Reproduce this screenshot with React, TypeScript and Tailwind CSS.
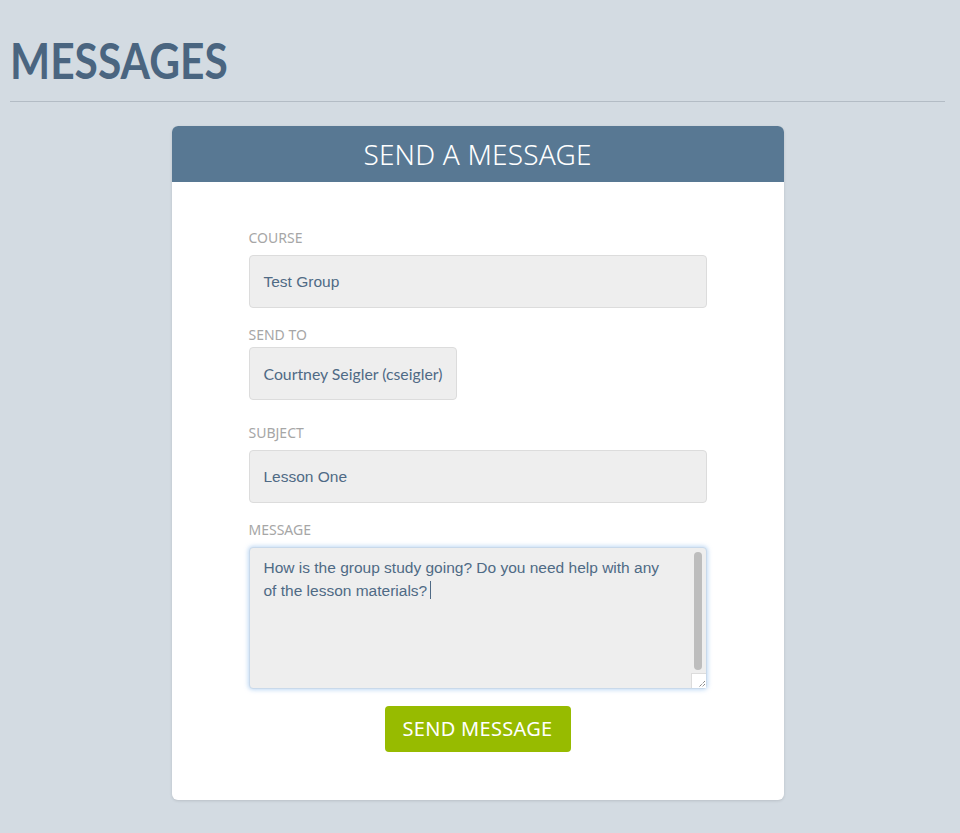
export default function App() {
  return (
    <div className="min-h-[833px] bg-[#d3dbe2] pl-[10px] pr-[15px] pt-[30px] pb-[33px] [font-family:'Noto_Sans',sans-serif]">
      <h1 className="origin-left scale-x-[0.85] text-[50px] font-bold leading-[60px] text-[#4a6580] [font-family:Lato,sans-serif]">MESSAGES</h1>
      <hr className="mt-[11px] border-t border-[#b3bcc5]" />

      <div className="mx-auto mt-[24px] w-[612px] overflow-hidden rounded-[6px] bg-white shadow-[0_1px_3px_rgba(0,0,0,0.12)]">
        <div className="flex h-[56px] items-center justify-center bg-[#587893]">
          <h2 className="text-[28px] font-light tracking-[0.2px] text-white">SEND A MESSAGE</h2>
        </div>

        <form className="px-[77px] pt-[46px] pb-[48px]" onSubmit={(e) => e.preventDefault()}>
          <label className="block text-[14px] leading-[20px] text-[#a6a6a6]">COURSE</label>
          <div className="mt-[7px] flex h-[53px] w-[458px] items-center rounded-[4px] border border-[#dcdcdc] bg-[#eeeeee] px-[14px] text-[15.5px] text-[#4f6a85] [font-family:'Liberation_Sans',Arial,sans-serif]">
            Test Group
          </div>

          <label className="mt-[17px] block text-[14px] leading-[20px] text-[#a6a6a6]">SEND TO</label>
          <div className="mt-[2px] inline-flex h-[53px] items-center whitespace-nowrap rounded-[4px] border border-[#dcdcdc] bg-[#eeeeee] px-[14px] text-[15.8px] text-[#4f6a85] [font-family:Lato,sans-serif]">
            Courtney Seigler (cseigler)
          </div>

          <label className="mt-[23px] block text-[14px] leading-[20px] text-[#a6a6a6]">SUBJECT</label>
          <div className="mt-[7px] flex h-[53px] w-[458px] items-center rounded-[4px] border border-[#dcdcdc] bg-[#eeeeee] px-[14px] text-[15.5px] text-[#4f6a85] [font-family:'Liberation_Sans',Arial,sans-serif]">
            Lesson One
          </div>

          <label className="mt-[17px] block text-[14px] leading-[20px] text-[#a6a6a6]">MESSAGE</label>
          <div className="relative mt-[7px] h-[142px] w-[458px] rounded-[4px] border border-[#c9d9ea] bg-[#eeeeee] shadow-[0_0_4px_1px_rgba(140,185,235,0.55)]">
            <p className="pt-[9px] pl-[14px] pr-[30px] text-[15.5px] leading-[21px] text-[#4f6a85] [font-family:'Liberation_Sans',Arial,sans-serif]">
              How is the group study going? Do you need help with any of the lesson materials?
              <span className="ml-[3px] inline-block h-[18px] w-px translate-y-[3px] bg-[#4f6a85]" />
            </p>
            <div className="absolute top-[4px] right-[4px] h-[118px] w-[8px] rounded-full bg-[#bdbdbd]" />
            <div className="absolute right-0 bottom-0 h-[15px] w-[15px] border-t border-l border-[#dcdcdc] bg-white">
              <svg viewBox="0 0 15 15" className="h-[15px] w-[15px]">
                <path d="M13 7 L7 13 M13 10 L10 13" stroke="#555" strokeWidth="1" strokeDasharray="1 1" />
              </svg>
            </div>
          </div>

          <div className="mt-[17px] flex justify-center">
            <button
              type="submit"
              className="h-[46px] w-[186px] rounded-[4px] bg-[#97bb00] text-[20px] tracking-[0.3px] text-white"
            >
              SEND MESSAGE
            </button>
          </div>
        </form>
      </div>
    </div>
  );
}
